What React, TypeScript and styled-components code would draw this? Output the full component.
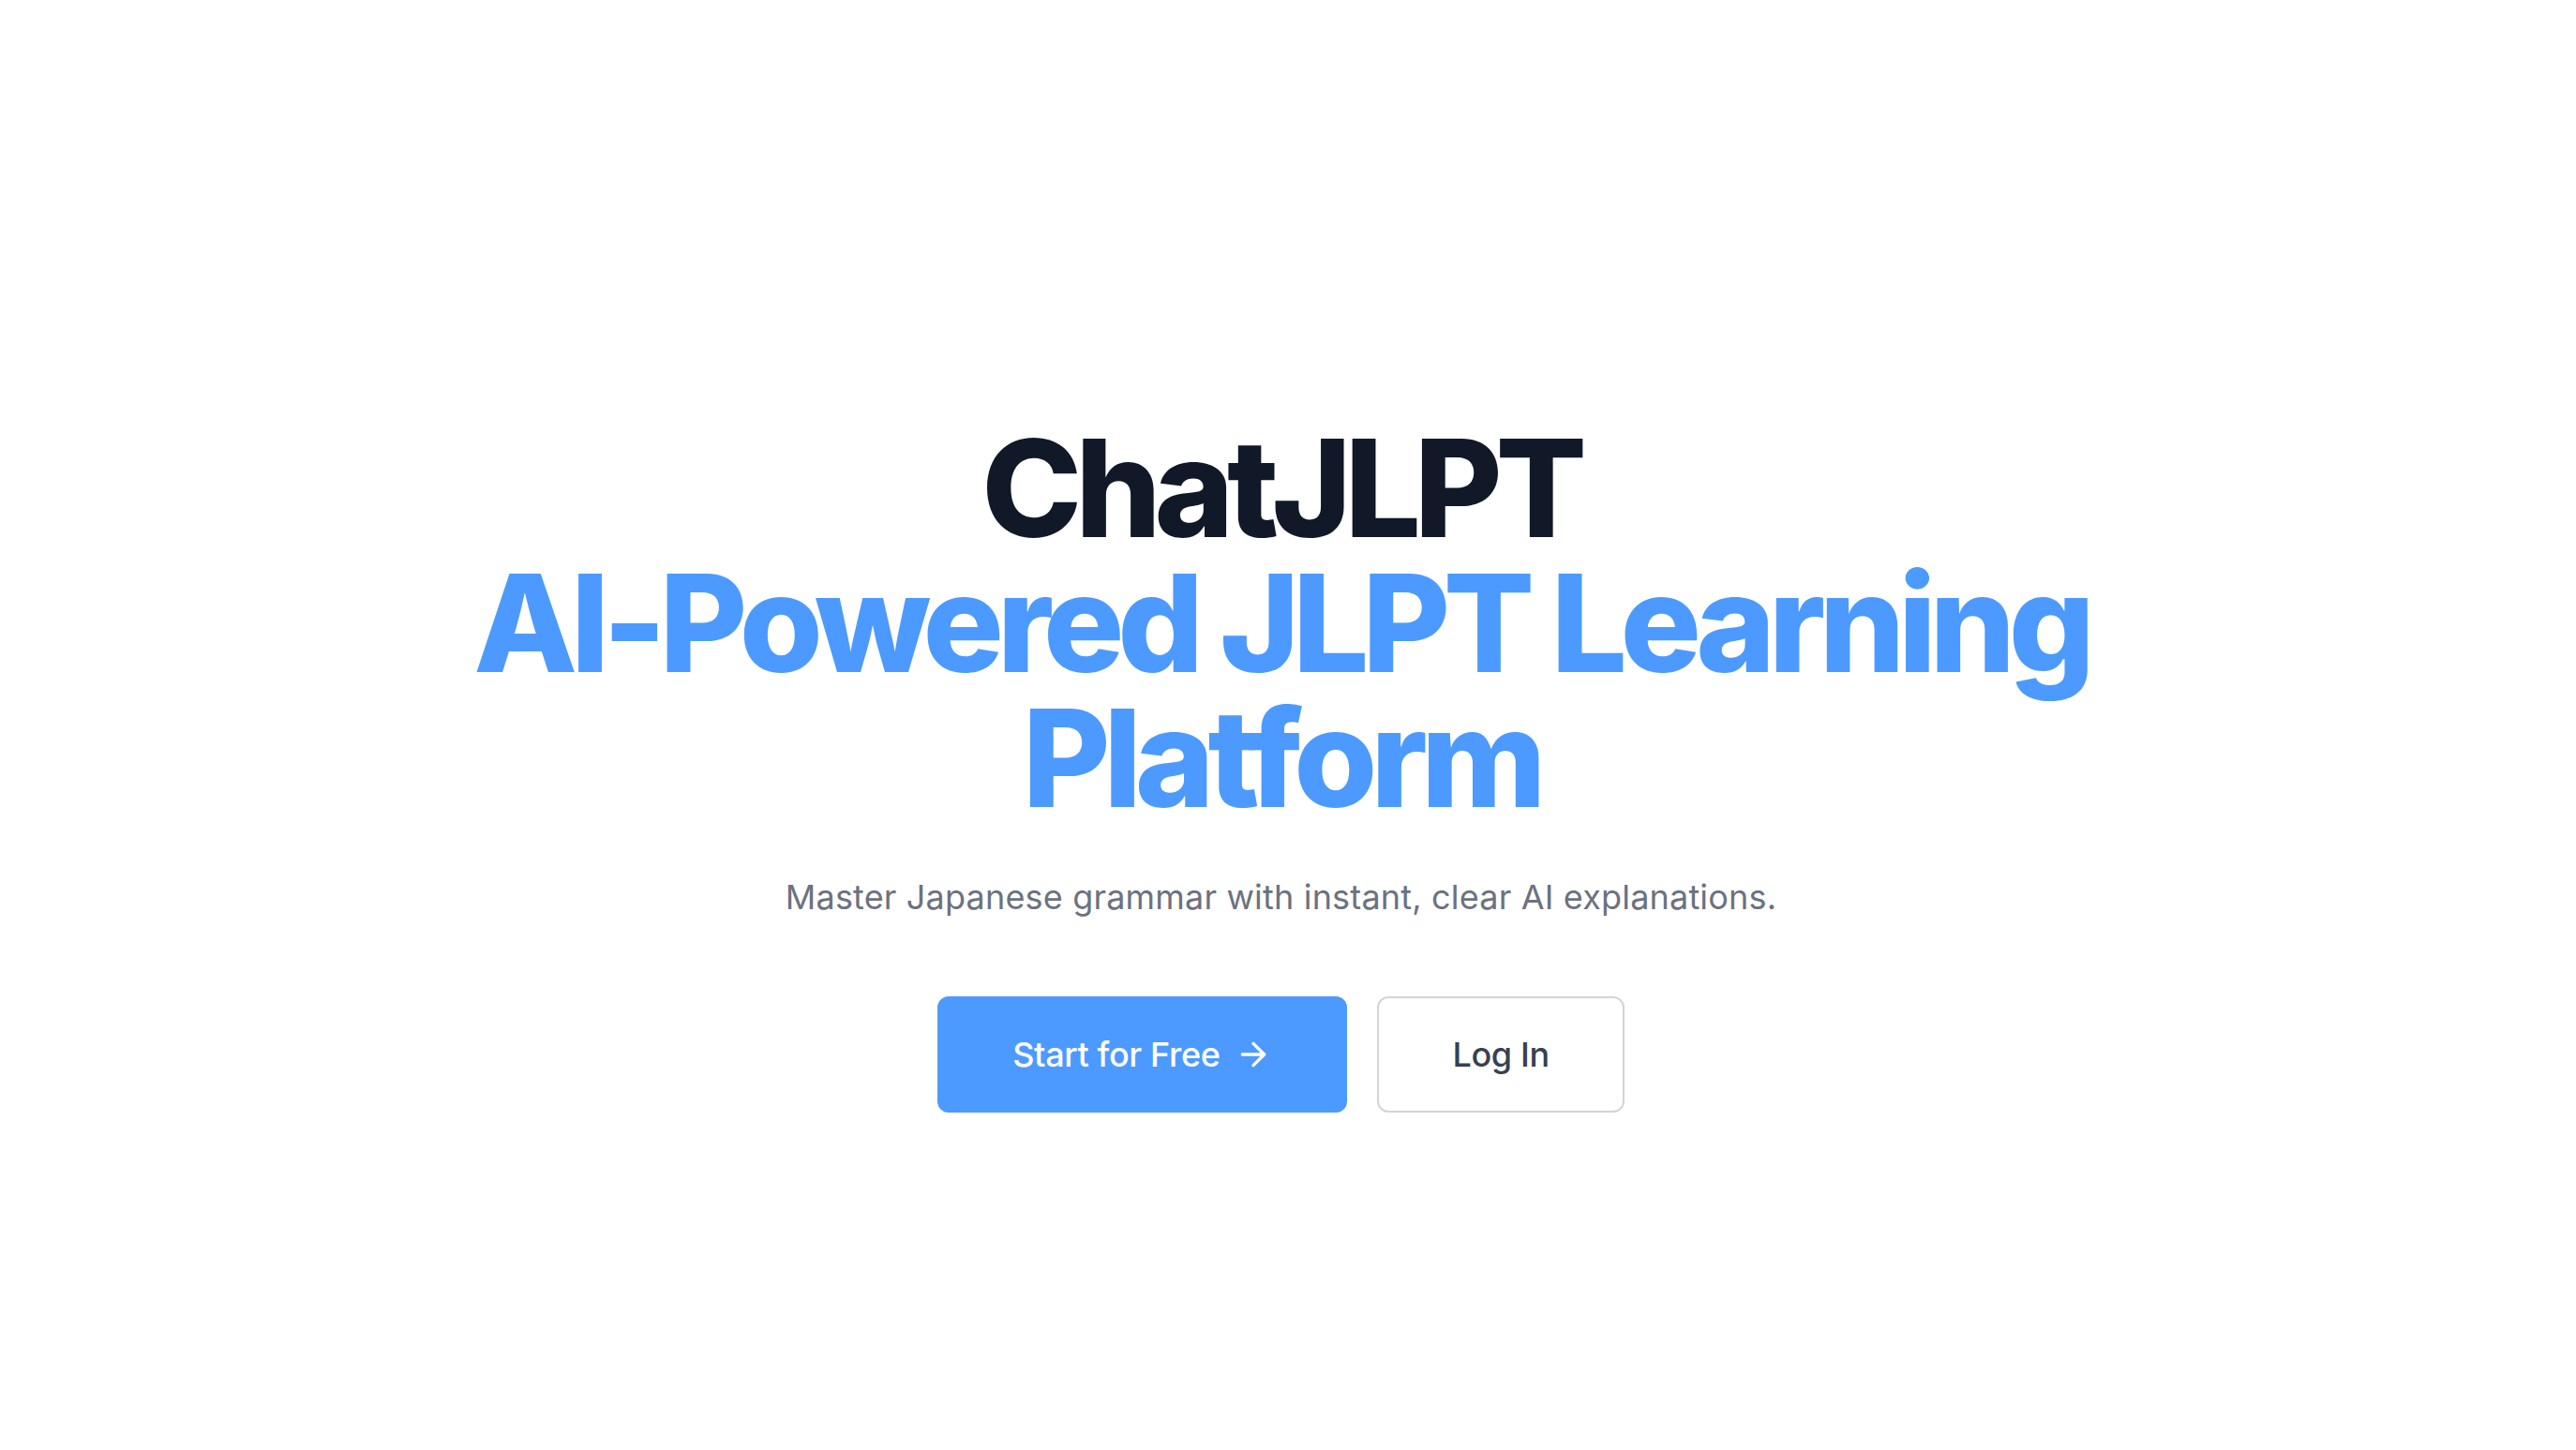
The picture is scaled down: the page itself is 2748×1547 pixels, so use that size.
import React from 'react'
import styled, { createGlobalStyle } from 'styled-components'
import { ArrowRight } from 'lucide-react'

const GlobalStyle = createGlobalStyle`
  html, body {
    margin: 0;
    padding: 0;
    background: #ffffff;
  }
  body {
    font-family: Inter, "Noto Sans", "Liberation Sans", sans-serif;
    -webkit-font-smoothing: antialiased;
  }
  * {
    box-sizing: border-box;
  }
`

// right padding leaves room for the scrollbar gutter the original page has
const Page = styled.main`
  min-height: 100vh;
  padding: 88px 15px 0 0;
  display: flex;
  align-items: center;
  justify-content: center;
`

const Hero = styled.section`
  max-width: 1880px;
  display: flex;
  flex-direction: column;
  align-items: center;
  text-align: center;
`

const Heading = styled.h1`
  margin: 0;
  font-size: 144px;
  line-height: 144px;
  font-weight: 800;
  letter-spacing: -0.05em;
  color: #111827;
`

const Accent = styled.span`
  display: block;
  color: #4c9aff;
`

const Lead = styled.p`
  margin: 48px 0 0;
  font-size: 36px;
  line-height: 56px;
  font-weight: 400;
  letter-spacing: 0.005em;
  color: #6b7280;
`

const Actions = styled.div`
  margin-top: 78px;
  display: flex;
  gap: 32px;
`

const Button = styled.a<{ $primary?: boolean }>`
  display: inline-flex;
  align-items: center;
  gap: 16px;
  padding: 32px 78px;
  border: 2px solid ${p => (p.$primary ? '#4c9aff' : '#d1d5db')};
  border-radius: 12px;
  background: ${p => (p.$primary ? '#4c9aff' : '#ffffff')};
  color: ${p => (p.$primary ? '#ffffff' : '#374151')};
  font-size: 36px;
  line-height: 56px;
  font-weight: 500;
  letter-spacing: -0.01em;
  text-decoration: none;
  cursor: pointer;
`

const App = () => {
  return (
    <>
      <GlobalStyle />
      <Page>
        <Hero>
          <Heading>
            ChatJLPT
            <Accent>AI-Powered JLPT Learning Platform</Accent>
          </Heading>
          <Lead>Master Japanese grammar with instant, clear AI explanations.</Lead>
          <Actions>
            <Button $primary href="#">
              Start for Free
              <ArrowRight size={40} strokeWidth={2} />
            </Button>
            <Button href="#">Log In</Button>
          </Actions>
        </Hero>
      </Page>
    </>
  )
}

export default App
